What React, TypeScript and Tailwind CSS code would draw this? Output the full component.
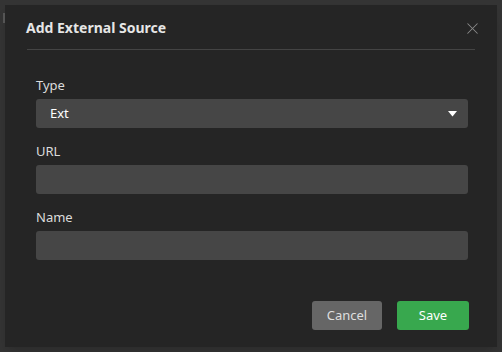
import { X } from "lucide-react";

function Field({ label, children }: { label: string; children: React.ReactNode }) {
  return (
    <div className="flex flex-col gap-[5px]">
      <label className="text-[13px] leading-[18px] text-[#dcdcdc]">{label}</label>
      {children}
    </div>
  );
}

export default function App() {
  return (
    <div
      className="relative w-[502px] h-[352px] bg-[#343434] p-[5px] overflow-hidden"
      style={{ fontFamily: '"Noto Sans", "Open Sans", sans-serif' }}
    >
      <div className="absolute left-[3px] top-[13px] w-[2px] h-[10px] bg-[#555]" />
      <div className="w-[492px] h-[342px] bg-[#252525] flex flex-col shadow-lg">
        <div className="h-[44px] flex items-center justify-between pl-[21px] pr-[15px] pt-[2px]">
          <h2 className="text-[14px] font-bold text-[#e6e6e6] leading-[18px]">Add External Source</h2>
          <button className="flex text-[#8a8a8a]">
            <X size={19} strokeWidth={1.3} />
          </button>
        </div>
        <div className="mx-[22px] h-px bg-[#444]" />
        <div className="flex flex-col gap-[14px] pl-[31px] pr-[29px] pt-[26px]">
          <Field label="Type">
            <div className="h-[29px] rounded-[3px] bg-[#464646] flex items-center justify-between pl-[14px] pr-[11px]">
              <span className="text-[13px] text-white">Ext</span>
              <svg width="9" height="6" viewBox="0 0 9 6">
                <path d="M0 0 L9 0 L4.5 5.5 Z" fill="#fff" />
              </svg>
            </div>
          </Field>
          <Field label="URL">
            <input className="h-[29px] rounded-[3px] bg-[#464646] outline-none px-[14px] text-[13px] text-white" />
          </Field>
          <Field label="Name">
            <input className="h-[29px] rounded-[3px] bg-[#464646] outline-none px-[14px] text-[13px] text-white" />
          </Field>
        </div>
        <div className="flex justify-end gap-[15px] pr-[28px] mt-auto mb-[17px]">
          <button className="w-[70px] h-[29px] rounded-[3px] bg-[#666] text-[13px] text-[#dedede]">Cancel</button>
          <button className="w-[72px] h-[29px] rounded-[3px] bg-[#38a84e] text-[13px] text-white">Save</button>
        </div>
      </div>
    </div>
  );
}
